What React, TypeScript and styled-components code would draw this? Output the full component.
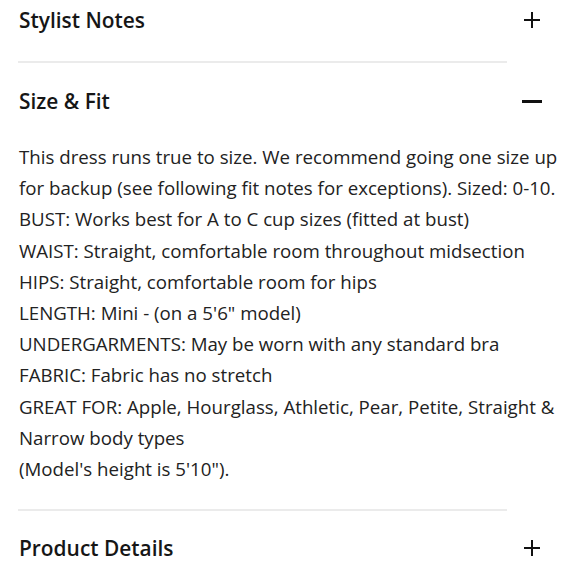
import styled, { createGlobalStyle } from 'styled-components';

const GlobalStyle = createGlobalStyle`
	body {
		margin: 0;
		background: #ffffff;
		font-family: 'Open Sans', Lato, sans-serif;
		color: #1f1f1f;
	}
`;

const Page = styled.div`
	width: 580px;
	padding: 0 0 0 19px;
	box-sizing: border-box;
`;

const Header = styled.div`
	display: flex;
	align-items: center;
	justify-content: space-between;
	height: 40px;
	padding-right: 37px;
`;

const Title = styled.h2`
	margin: 0;
	font-size: 20.9px;
	font-weight: 600;
	color: #161616;
`;

const Divider = styled.hr<{ $above: number; $below: number }>`
	border: 0;
	height: 2px;
	background: #ebebeb;
	width: 489px;
	margin: ${(p) => p.$above}px 0 ${(p) => p.$below}px -1px;
`;

const Body = styled.div`
	margin-top: 20px;
	font-size: 18.7px;
	line-height: 31.2px;
	color: #222;
	width: 550px;
`;

const Toggle = ({ open }: { open: boolean }) => (
	<svg width="22" height="18" viewBox="0 0 22 18">
		<path
			d={open ? 'M1 9.5H21' : 'M3 9H19M11 1V17'}
			stroke="#111"
			strokeWidth={open ? 3 : 2}
		/>
	</svg>
);

const notes = [
	'This dress runs true to size. We recommend going one size up for backup (see following fit notes for exceptions). Sized: 0-10.',
	'BUST: Works best for A to C cup sizes (fitted at bust)',
	'WAIST: Straight, comfortable room throughout midsection',
	'HIPS: Straight, comfortable room for hips',
	'LENGTH: Mini - (on a 5\'6" model)',
	'UNDERGARMENTS: May be worn with any standard bra',
	'FABRIC: Fabric has no stretch',
	'GREAT FOR: Apple, Hourglass, Athletic, Pear, Petite, Straight & Narrow body types',
	'(Model\'s height is 5\'10").',
];

export default function App() {
	return (
		<Page>
			<GlobalStyle />
			<Header>
				<Title>Stylist Notes</Title>
				<Toggle open={false} />
			</Header>
			<Divider $above={21} $below={18} />
			<Header>
				<Title>Size &amp; Fit</Title>
				<Toggle open />
			</Header>
			<Body>
				{notes.map((n) => (
					<div key={n}>{n}</div>
				))}
			</Body>
			<Divider $above={25} $below={17} />
			<Header>
				<Title>Product Details</Title>
				<Toggle open={false} />
			</Header>
		</Page>
	);
}
